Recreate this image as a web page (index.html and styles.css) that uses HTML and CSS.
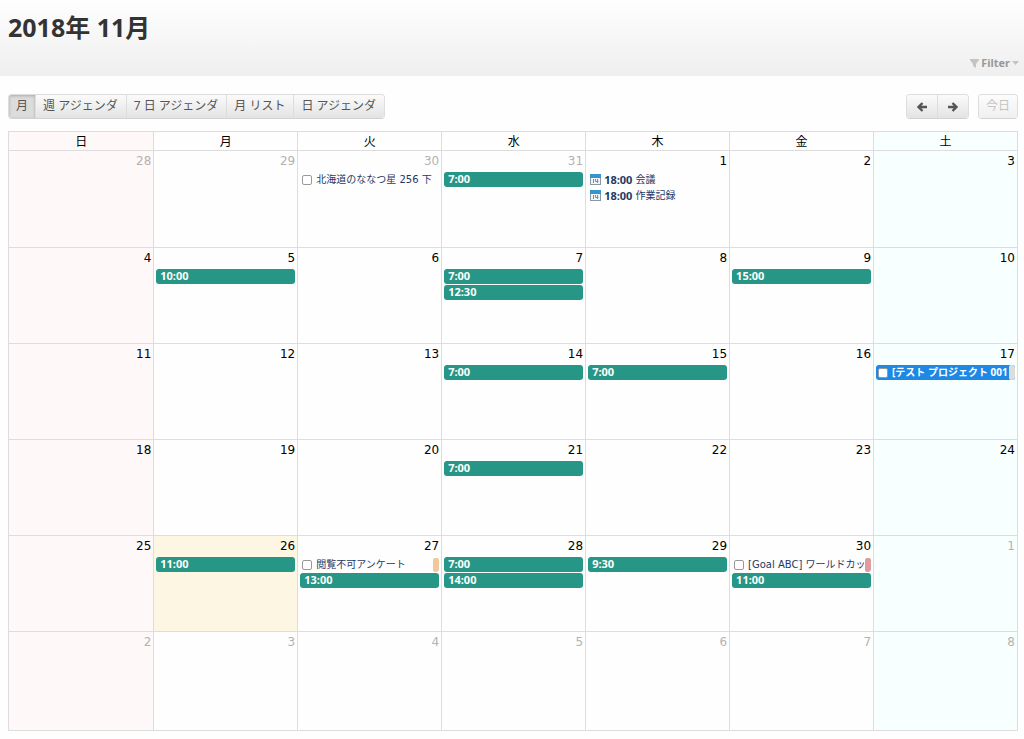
FILE: index.html
```html
<!DOCTYPE html>
<html lang="ja">
<head>
  <meta charset="UTF-8">
  <meta name="viewport" content="width=device-width, initial-scale=1.0">
  <title>2018年 11月</title>
  <link rel="stylesheet" href="styles.css">
</head>
<body>

  <!-- Icons -->
  <svg class="sprite" aria-hidden="true">
    <symbol id="icon-calendar" viewBox="0 0 11 11">
      <rect width="11" height="11" fill="#8a97a8"/>
      <rect x="1" y="4" width="9" height="6" fill="#f1f4f7"/>
      <rect width="11" height="4" fill="#3695cf"/>
      <path d="M3.500 5v4M5.500 5v2.500h3M7.500 5v4" fill="none" stroke="#7d8da0"/>
    </symbol>
    <symbol id="icon-arrow" viewBox="0 0 12 12">
      <path d="M6.500 2L2.500 6l4 4M2.500 6H11" fill="none" stroke="#555" stroke-width="2.400"/>
    </symbol>
  </svg>

  <!-- Header -->
  <header class="page-header">
    <h1>2018年 11月</h1>
    <button type="button" class="filter">
      <svg width="9" height="9" viewBox="0 0 9 9"><path d="M0 0h9v1L6 5v4L3 7V5L0 1z" fill="#c4c4c4"/></svg>
      Filter
      <svg width="7" height="4" viewBox="0 0 7 4"><path d="M0 0h7L3.500 4z" fill="#c4c4c4"/></svg>
    </button>
  </header>

  <main>
    <!-- Toolbar -->
    <div class="toolbar">
      <div class="button-group views">
        <button type="button" class="active">月</button>
        <button type="button">週 アジェンダ</button>
        <button type="button">7 日 アジェンダ</button>
        <button type="button">月 リスト</button>
        <button type="button">日 アジェンダ</button>
      </div>
      <div class="toolbar-right">
        <div class="button-group arrows">
          <button type="button" aria-label="前の月"><svg width="12" height="12"><use href="#icon-arrow"/></svg></button>
          <button type="button" aria-label="次の月"><svg class="flip" width="12" height="12"><use href="#icon-arrow"/></svg></button>
        </div>
        <div class="button-group">
          <button type="button" class="today-button" disabled>今日</button>
        </div>
      </div>
    </div>

    <!-- Calendar -->
    <table class="calendar">
      <thead>
        <tr>
          <th class="sun">日</th><th>月</th><th>火</th><th>水</th><th>木</th><th>金</th><th class="sat">土</th>
        </tr>
      </thead>
      <tbody>
        <tr class="first">
          <td class="sun other"><div class="day">28</div></td>
          <td class="other"><div class="day">29</div></td>
          <td class="other"><div class="day">30</div>
            <label class="event todo"><input type="checkbox"><span class="title">北海道のななつ星 256 下</span></label>
          </td>
          <td class="other"><div class="day">31</div><a href="#" class="event bar">7:00</a></td>
          <td><div class="day">1</div>
            <a href="#" class="event schedule"><svg width="11" height="11"><use href="#icon-calendar"/></svg><b>18:00</b><span>会議</span></a>
            <a href="#" class="event schedule"><svg width="11" height="11"><use href="#icon-calendar"/></svg><b>18:00</b><span>作業記録</span></a>
          </td>
          <td><div class="day">2</div></td>
          <td class="sat"><div class="day">3</div></td>
        </tr>
        <tr>
          <td class="sun"><div class="day">4</div></td>
          <td><div class="day">5</div><a href="#" class="event bar">10:00</a></td>
          <td><div class="day">6</div></td>
          <td><div class="day">7</div><a href="#" class="event bar">7:00</a><a href="#" class="event bar">12:30</a></td>
          <td><div class="day">8</div></td>
          <td><div class="day">9</div><a href="#" class="event bar">15:00</a></td>
          <td class="sat"><div class="day">10</div></td>
        </tr>
        <tr>
          <td class="sun"><div class="day">11</div></td>
          <td><div class="day">12</div></td>
          <td><div class="day">13</div></td>
          <td><div class="day">14</div><a href="#" class="event bar">7:00</a></td>
          <td><div class="day">15</div><a href="#" class="event bar">7:00</a></td>
          <td><div class="day">16</div></td>
          <td class="sat"><div class="day">17</div>
            <label class="event todo project"><input type="checkbox"><span class="title">[テスト プロジェクト 001</span><i class="tag gray"></i></label>
          </td>
        </tr>
        <tr>
          <td class="sun"><div class="day">18</div></td>
          <td><div class="day">19</div></td>
          <td><div class="day">20</div></td>
          <td><div class="day">21</div><a href="#" class="event bar">7:00</a></td>
          <td><div class="day">22</div></td>
          <td><div class="day">23</div></td>
          <td class="sat"><div class="day">24</div></td>
        </tr>
        <tr>
          <td class="sun"><div class="day">25</div></td>
          <td class="today"><div class="day">26</div><a href="#" class="event bar">11:00</a></td>
          <td><div class="day">27</div>
            <label class="event todo"><input type="checkbox"><span class="title">閲覧不可アンケート</span><i class="tag orange"></i></label>
            <a href="#" class="event bar">13:00</a>
          </td>
          <td><div class="day">28</div><a href="#" class="event bar">7:00</a><a href="#" class="event bar">14:00</a></td>
          <td><div class="day">29</div><a href="#" class="event bar">9:30</a></td>
          <td><div class="day">30</div>
            <label class="event todo"><input type="checkbox"><span class="title">[Goal ABC] ワールドカッ</span><i class="tag red"></i></label>
            <a href="#" class="event bar">11:00</a>
          </td>
          <td class="sat other"><div class="day">1</div></td>
        </tr>
        <tr class="last">
          <td class="sun other"><div class="day">2</div></td>
          <td class="other"><div class="day">3</div></td>
          <td class="other"><div class="day">4</div></td>
          <td class="other"><div class="day">5</div></td>
          <td class="other"><div class="day">6</div></td>
          <td class="other"><div class="day">7</div></td>
          <td class="sat other"><div class="day">8</div></td>
        </tr>
      </tbody>
    </table>
  </main>

</body>
</html>
```
FILE: styles.css
```css
* {
  margin: 0;
  padding: 0;
  box-sizing: border-box;
}

body {
  font-family: "Noto Sans", "Noto Sans CJK JP", sans-serif;
  font-size: 12px;
  color: #000;
  background-color: #fefefe;
}

a {
  text-decoration: none;
}

button {
  font: inherit;
  cursor: pointer;
}

.sprite {
  display: none;
}

/* Header */
.page-header {
  display: flex;
  flex-direction: column;
  justify-content: space-between;
  height: 76px;
  padding: 8px 5px 4px 8px;
  background: linear-gradient(#fefefe, #efefef);
}

.page-header h1 {
  font-size: 25px;
  line-height: 38px;
  color: #333;
}

.filter {
  display: flex;
  align-items: center;
  align-self: flex-end;
  gap: 2px;
  border: none;
  background: none;
  color: #999;
  font-size: 11px;
  font-weight: bold;
  line-height: 18px;
}

/* Toolbar */
.toolbar {
  display: flex;
  justify-content: space-between;
  padding: 18px 6px 12px 8px;
}

.toolbar-right {
  display: flex;
  gap: 9px;
}

.button-group {
  display: flex;
  border: 1px solid #ddd;
  border-bottom-color: #d2d2d2;
  border-radius: 4px;
  overflow: hidden;
}

.button-group button {
  height: 23px;
  padding: 0 7px 2px;
  border: none;
  border-right: 1px solid #ddd;
  background: linear-gradient(#fbfbfb, #e3e3e3);
  color: #555;
  line-height: 20px;
}

.button-group button:last-child {
  border-right: none;
}

.views button {
  padding-right: 8px;
}

.button-group .active {
  padding-right: 7px;
  background: #dcdcdc;
  box-shadow: inset 0 1px 3px #aaa;
}

.arrows button {
  display: flex;
  align-items: center;
  padding: 0 9px;
}

.flip {
  transform: scaleX(-1);
}

.button-group .today-button {
  background: linear-gradient(#fcfcfc, #f0f0f0);
  color: #c4c4c4;
}

/* Calendar */
main {
  padding-bottom: 8px;
}

.calendar {
  width: calc(100% - 14px);
  margin-left: 8px;
  table-layout: fixed;
  border-collapse: collapse;
}

.calendar th,
.calendar td {
  border: 1px solid #ddd;
}

.calendar th {
  height: 19px;
  padding-top: 2px;
  font-weight: normal;
  line-height: 16px;
}

.calendar td {
  height: 96px;
  padding: 0 2px;
  vertical-align: top;
}

.calendar .first td {
  height: 97px;
}

.calendar .last td {
  height: 99px;
}

.calendar .sun {
  width: 14.4%;
  background-color: #fef8f8;
}

.calendar .sat {
  background-color: #f8ffff;
}

.calendar .today {
  background-color: #fdf6e2;
}

.day {
  height: 21px;
  font-family: "DejaVu Sans", sans-serif;
  line-height: 21px;
  text-align: right;
}

.other .day {
  color: #b3b3b3;
}

/* Events */
.event {
  display: flex;
  align-items: center;
  height: 15px;
  margin-bottom: 1px;
  border-radius: 3px;
  color: #1f3864;
  font-size: 10px;
  line-height: 15px;
  white-space: nowrap;
  overflow: hidden;
}

.bar {
  padding: 0 4px 1px;
  background-color: #269686;
  color: #fff;
  font-size: 11px;
  font-weight: bold;
  line-height: 14px;
}

.schedule {
  gap: 3px;
  padding-left: 2px;
}

.schedule b {
  font-size: 11px;
  line-height: 14px;
}

.todo {
  gap: 4px;
  padding-left: 2px;
}

.todo input {
  flex: none;
  width: 10px;
  height: 10px;
  appearance: none;
  border: 1px solid #999;
  border-radius: 2px;
  background-color: #fff;
}

.todo .title {
  flex: 1;
  min-width: 0;
  overflow: hidden;
  font-family: "DejaVu Sans", "Noto Sans CJK JP", sans-serif;
}

.project {
  background-color: #1e88e5;
  color: #fff;
  font-weight: bold;
}

.project .title {
  font-family: "Noto Sans", "Noto Sans CJK JP", sans-serif;
}

.tag {
  flex: none;
  width: 6px;
  height: 14px;
  margin-left: -4px;
  border-radius: 2px;
}

.gray {
  height: 15px;
  background-color: #ddd;
}

.orange {
  background-color: #f0c89c;
}

.red {
  background-color: #e09c9c;
}
```
